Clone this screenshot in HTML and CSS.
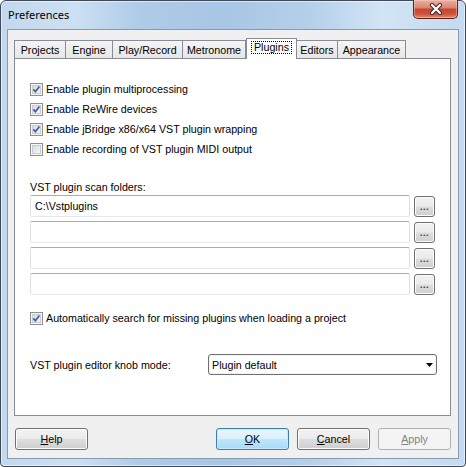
FILE: index.html
```html
<!DOCTYPE html>
<html>
<head>
<meta charset="utf-8">
<link rel="stylesheet" href="styles.css">
</head>
<body>
<div class="window">
  <div class="titlebar">
    <span class="title">Preferences</span>
    <div class="close">
      <svg width="14" height="12" viewBox="0 0 14 12">
        <path d="M3 2 L11 10 M11 2 L3 10" stroke="#3a2a2a" stroke-width="4.2" stroke-linecap="round"/>
        <path d="M3 2 L11 10 M11 2 L3 10" stroke="#ffffff" stroke-width="2.2" stroke-linecap="round"/>
      </svg>
    </div>
  </div>
  <div class="client">
    <div class="tabs">
      <div class="tab t-projects">Projects</div>
      <div class="tab t-engine">Engine</div>
      <div class="tab t-play">Play/Record</div>
      <div class="tab t-metro">Metronome</div>
      <div class="tab t-plugins selected"><span class="focus">Plugins</span></div>
      <div class="tab t-editors">Editors</div>
      <div class="tab t-appear">Appearance</div>
    </div>
    <div class="panel">
      <div class="check"><span class="box"><svg width="11" height="11" viewBox="0 0 11 11"><path d="M2.4 5.4 L4.4 7.7 L8.4 2.6" fill="none" stroke="#3c5aa8" stroke-width="1.7"/></svg></span><span>Enable plugin multiprocessing</span></div>
      <div class="check"><span class="box"><svg width="11" height="11" viewBox="0 0 11 11"><path d="M2.4 5.4 L4.4 7.7 L8.4 2.6" fill="none" stroke="#3c5aa8" stroke-width="1.7"/></svg></span><span>Enable ReWire devices</span></div>
      <div class="check"><span class="box"><svg width="11" height="11" viewBox="0 0 11 11"><path d="M2.4 5.4 L4.4 7.7 L8.4 2.6" fill="none" stroke="#3c5aa8" stroke-width="1.7"/></svg></span><span>Enable jBridge x86/x64 VST plugin wrapping</span></div>
      <div class="check"><span class="box"></span><span>Enable recording of VST plugin MIDI output</span></div>

      <div class="folders-label">VST plugin scan folders:</div>
      <div class="folder-row"><div class="field">C:\Vstplugins</div><div class="dots">...</div></div>
      <div class="folder-row"><div class="field"></div><div class="dots">...</div></div>
      <div class="folder-row"><div class="field"></div><div class="dots">...</div></div>
      <div class="folder-row"><div class="field"></div><div class="dots">...</div></div>

      <div class="check auto"><span class="box"><svg width="11" height="11" viewBox="0 0 11 11"><path d="M2.4 5.4 L4.4 7.7 L8.4 2.6" fill="none" stroke="#3c5aa8" stroke-width="1.7"/></svg></span><span>Automatically search for missing plugins when loading a project</span></div>

      <div class="knob-row">
        <span class="knob-label">VST plugin editor knob mode:</span>
        <div class="select"><span>Plugin default</span><svg class="arrow" width="7" height="4" viewBox="0 0 7 4"><path d="M0 0 H7 L3.5 4 Z" fill="#000"/></svg></div>
      </div>
    </div>
    <div class="buttons">
      <div class="btn"><span><u>H</u>elp</span></div>
      <div class="btn default push"><span><u>O</u>K</span></div>
      <div class="btn"><span><u>C</u>ancel</span></div>
      <div class="btn disabled"><span><u>A</u>pply</span></div>
    </div>
  </div>
</div>
</body>
</html>
```
FILE: styles.css
```css
html, body {
  margin: 0;
  padding: 0;
}
body {
  width: 466px;
  height: 467px;
  overflow: hidden;
  background: #ffffff;
}
.window {
  box-sizing: border-box;
  width: 466px;
  height: 467px;
  border: 1px solid #404a56;
  border-radius: 6px 6px 4px 4px;
  background: linear-gradient(90deg, #c3d8ee 0%, #cde0f3 16%, #aecbe8 30%, #a8c6e5 48%, #b4cfea 66%, #d2e4f5 82%, #c4daf0 100%);
  box-shadow: inset 0 0 0 1px rgba(255, 255, 255, 0.55);
  display: flex;
  flex-direction: column;
}
.titlebar {
  height: 28px;
  display: flex;
  align-items: flex-start;
}
.title {
  font-family: "Noto Sans", sans-serif;
  font-size: 11px;
  line-height: 16px;
  color: #000;
  margin: 6px 0 0 7px;
}
.close {
  margin-left: auto;
  margin-right: 7px;
  margin-top: -1px;
  width: 45px;
  height: 19px;
  box-sizing: border-box;
  border: 1px solid #5e2218;
  border-top: none;
  border-radius: 0 0 5px 5px;
  background: linear-gradient(#eab0a3 0%, #dd8572 42%, #c9462f 52%, #cc533c 78%, #e2907a 100%);
  box-shadow: inset 0 0 0 1px rgba(255, 210, 200, 0.45);
  display: flex;
  align-items: center;
  justify-content: center;
}
.client {
  box-sizing: border-box;
  margin: 0 6px;
  height: 430px;
  border: 1px solid #8799ae;
  background: #f0f0f0;
  font-family: "Liberation Sans", Arial, sans-serif;
  font-size: 10.7px;
  color: #000;
}
.tabs {
  display: flex;
  align-items: flex-end;
  height: 21px;
  padding: 8px 0 0 6px;
  position: relative;
  z-index: 1;
}
.tab {
  box-sizing: border-box;
  height: 18px;
  margin-bottom: 1px;
  margin-left: -1px;
  border: 1px solid #898c95;
  border-bottom: none;
  background: linear-gradient(#f5f5f5, #e6e6e6);
  display: flex;
  align-items: center;
  justify-content: center;
  white-space: nowrap;
  padding-top: 1px;
}
.t-projects { width: 52px; margin-left: 0; }
.t-engine { width: 48px; }
.t-play { width: 71px; }
.t-metro { width: 64px; }
.t-plugins { width: 51px; }
.t-editors { width: 42px; }
.t-appear { width: 69px; }
.tab.selected {
  height: 21px;
  margin-bottom: 0;
  margin-left: 0;
  background: #ffffff;
  padding-top: 0;
  padding-bottom: 3px;
}
.focus {
  outline: 1px dotted #000;
  outline-offset: 0;
  padding: 0 2px;
  line-height: 11px;
}
.panel {
  box-sizing: border-box;
  margin: -1px 7px 0 6px;
  height: 358px;
  border: 1px solid #898c95;
  background: #ffffff;
  padding: 20px 0 0 15px;
  display: flex;
  flex-direction: column;
}
.check {
  display: flex;
  align-items: center;
  height: 20px;
  gap: 3px;
  white-space: nowrap;
}
.box {
  box-sizing: border-box;
  width: 13px;
  height: 13px;
  border: 1px solid #8e8f8f;
  background: linear-gradient(135deg, #d0d4d9 0%, #e8eaec 55%, #fbfbfb 100%);
  box-shadow: inset 0 0 0 1px #f6f6f6, inset 0 0 0 2px #c9ccd1;
  display: flex;
  align-items: center;
  justify-content: center;
  flex: none;
}
.box svg { display: block; }
.folders-label {
  margin-top: 21px;
  line-height: 14px;
  height: 14px;
}
.folder-row {
  display: flex;
  align-items: center;
  height: 22px;
  margin-top: 1px;
}
.folder-row + .folder-row {
  margin-top: 4px;
}
.field {
  box-sizing: border-box;
  width: 380px;
  height: 22px;
  border: 1px solid;
  border-color: #abadb3 #dbdfe6 #e3e9ef #e2e3ea;
  border-radius: 2px;
  padding-left: 4px;
  display: flex;
  align-items: center;
}
.dots {
  box-sizing: border-box;
  width: 21px;
  height: 21px;
  margin-left: 4px;
  border: 1px solid #707070;
  border-radius: 3px;
  background: linear-gradient(#f2f2f2 0%, #ebebeb 48%, #dddddd 52%, #cfcfcf 100%);
  box-shadow: inset 0 0 0 1px #fcfcfc;
  color: #2e2570;
  font-weight: bold;
  font-size: 9px;
  line-height: 9px;
  display: flex;
  align-items: flex-end;
  justify-content: center;
  padding-bottom: 4px;
  letter-spacing: 0.5px;
}
.check.auto {
  margin-top: 13px;
}
.knob-row {
  display: flex;
  align-items: center;
  height: 21px;
  margin-top: 26px;
}
.knob-label {
  width: 178px;
  flex: none;
}
.select {
  box-sizing: border-box;
  width: 229px;
  height: 21px;
  border: 1px solid #707070;
  border-radius: 3px;
  background: #ffffff;
  box-shadow: inset 0 0 0 1px #f4f4f4;
  padding-left: 3px;
  display: flex;
  align-items: center;
}
.arrow {
  margin-left: auto;
  margin-right: 3px;
  display: block;
}
.buttons {
  display: flex;
  margin: 12px 7px 0 7px;
  gap: 8px;
}
.btn {
  box-sizing: border-box;
  width: 73px;
  height: 22px;
  border: 1px solid #707070;
  border-radius: 3px;
  background: linear-gradient(#f2f2f2 0%, #ebebeb 48%, #dddddd 52%, #cfcfcf 100%);
  box-shadow: inset 0 0 0 1px #fcfcfc;
  display: flex;
  align-items: center;
  justify-content: center;
}
.btn.push {
  margin-left: auto;
}
.btn.default {
  border-color: #3c7fb1;
  background: linear-gradient(#eaf6fd 0%, #d9f0fc 48%, #bee6fd 52%, #a7d9f5 100%);
  box-shadow: inset 0 0 0 1px #c6eafb;
}
.btn.disabled {
  border-color: #adb2b5;
  background: #f4f4f4;
  box-shadow: none;
  color: #838383;
}
u {
  text-decoration: underline;
  text-underline-offset: 1px;
}
```
